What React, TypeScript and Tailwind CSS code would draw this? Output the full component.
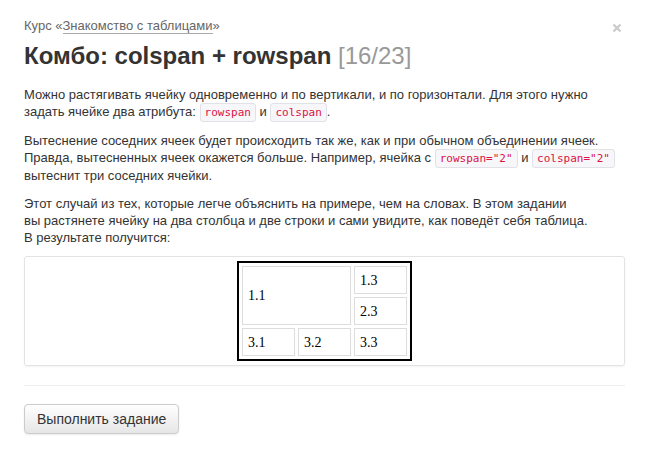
import React from "react";

const Code = ({ children }: { children: React.ReactNode }) => (
  <code className="font-['DejaVu_Sans_Mono',monospace] text-[11px] text-[#dd1144] bg-[#f7f7f9] border border-[#e1e1e8] rounded-[3px] px-[4px] py-[2px]">
    {children}
  </code>
);

const Cell = ({ children, className = "" }: { children: React.ReactNode; className?: string }) => (
  <div
    className={
      "border border-[#dddddd] flex items-center pl-[5px] font-['Liberation_Serif',serif] text-[14px] text-black " +
      className
    }
  >
    {children}
  </div>
);

export default function App() {
  return (
    <div className="relative w-[649px] h-[450px] bg-white font-['Liberation_Sans',Arial,sans-serif] text-[#333333]">
      <div className="px-6 pt-[17px]">
        <div className="text-[13px] leading-[18px] text-[#666666]">
          Курс «<span className="border-b border-[#aaaaaa]">Знакомство с таблицами</span>»
        </div>
        <h1 className="mt-[6px] text-[24px] leading-[30px] font-bold text-[#333333]">
          Комбо: colspan + rowspan <span className="font-normal text-[#999999]">[16/23]</span>
        </h1>
        <div className="mt-[15px] text-[13px] leading-[17px]">
          <p className="mb-[11px]">
            Можно растягивать ячейку одновременно и по вертикали, и по горизонтали. Для этого нужно
            <br />
            задать ячейке два атрибута: <Code>rowspan</Code> и <Code>colspan</Code>.
          </p>
          <p className="mb-[11px]">
            Вытеснение соседних ячеек будет происходить так же, как и при обычном объединении ячеек.
            <br />
            Правда, вытесненных ячеек окажется больше. Например, ячейка с <Code>rowspan="2"</Code> и{" "}
            <Code>colspan="2"</Code>
            <br />
            вытеснит три соседних ячейки.
          </p>
          <p>
            Этот случай из тех, которые легче объяснить на примере, чем на словах. В этом задании
            <br />
            вы растянете ячейку на два столбца и две строки и сами увидите, как поведёт себя таблица.
            <br />В результате получится:
          </p>
        </div>
        <div className="mt-[10px] border border-[#e3e3e3] rounded-[3px] p-[4px] flex justify-center shadow-[0_1px_2px_rgba(0,0,0,0.05)]">
          <div className="border-2 border-black p-[3px] grid grid-cols-[53px_53px_53px] grid-rows-[28px_28px_28px] gap-[3px]">
            <Cell className="col-span-2 row-span-2">1.1</Cell>
            <Cell>1.3</Cell>
            <Cell>2.3</Cell>
            <Cell>3.1</Cell>
            <Cell>3.2</Cell>
            <Cell>3.3</Cell>
          </div>
        </div>
        <div className="mt-[19px] border-t border-[#eeeeee]" />
        <button className="mt-[18px] h-[30px] px-[12px] text-[14px] text-[#333333] border border-[#cccccc] rounded-[4px] bg-gradient-to-b from-white to-[#e6e6e6] shadow-[0_1px_2px_rgba(0,0,0,0.08)]">
          Выполнить задание
        </button>
      </div>
      <div className="absolute left-[612px] top-[23px]">
        <svg width="10" height="10" viewBox="0 0 10 10">
          <path d="M1.5 1.5 L8.5 8.5 M8.5 1.5 L1.5 8.5" stroke="#cccccc" strokeWidth="2.4" />
        </svg>
      </div>
    </div>
  );
}
